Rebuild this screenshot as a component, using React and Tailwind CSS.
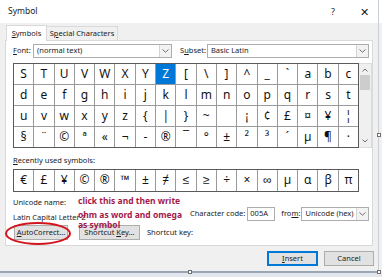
import React from "react";

const rows = [
  ["S", "T", "U", "V", "W", "X", "Y", "Z", "[", "\\", "]", "^", "_", "`", "a", "b", "c"],
  ["d", "e", "f", "g", "h", "i", "j", "k", "l", "m", "n", "o", "p", "q", "r", "s", "t"],
  ["u", "v", "w", "x", "y", "z", "{", "|", "}", "~", "", "¡", "¢", "£", "¤", "¥", "¦"],
  ["§", "¨", "©", "ª", "«", "¬", "-", "®", "¯", "°", "±", "²", "³", "´", "µ", "¶", "·"],
];

const recent = ["€", "£", "¥", "©", "®", "™", "±", "≠", "≤", "≥", "÷", "×", "∞", "µ", "α", "β", "π"];

function Chevron() {
  return (
    <svg width="7" height="4" viewBox="0 0 7 4" fill="none" stroke="#606060" strokeWidth="0.9">
      <path d="M0.5 0.5 L3.5 3.2 L6.5 0.5" />
    </svg>
  );
}

function Select({ value, className }) {
  return (
    <div className={`flex h-[14px] items-center border border-[#adadad] bg-white ${className}`}>
      <span className="flex-1 whitespace-nowrap pl-[3px] leading-none">{value}</span>
      <span className="flex h-full w-[12px] items-center justify-center border-l border-[#d4d4d4] bg-[#f2f2f2]">
        <Chevron />
      </span>
    </div>
  );
}

function Button({ children, primary, className }) {
  return (
    <div
      className={`flex h-[15px] items-center justify-center whitespace-nowrap bg-[#e1e1e1] leading-none ${
        primary ? "border-2 border-[#0078d7]" : "border border-[#adadad]"
      } ${className}`}
    >
      {children}
    </div>
  );
}

export default function App() {
  return (
    <div
      className="relative h-[277px] w-[382px] overflow-hidden bg-[#f0f0f0] text-[7.5px] text-[#1a1a1a]"
      style={{ fontFamily: '"Noto Sans", sans-serif' }}
    >
      {/* title bar */}
      <div className="flex h-[23px] items-center bg-white pl-[8px]">
        <span className="text-[8.5px]">Symbol</span>
        <span className="ml-auto mr-[25px] text-[9px]">?</span>
        <span className="mr-[13px] text-[11px] leading-none">✕</span>
      </div>

      {/* tabs */}
      <div className="flex h-[17px] items-end pl-[6px]">
        <div className="relative z-10 -mb-px flex h-[16px] w-[41px] items-center justify-center border border-b-0 border-[#d9d9d9] bg-white">
          <span>
            <u>S</u>ymbols
          </span>
        </div>
        <div className="flex h-[14px] w-[71px] items-center justify-center border border-b-0 border-l-0 border-[#d9d9d9]">
          <span>
            S<u>p</u>ecial Characters
          </span>
        </div>
      </div>

      {/* panel */}
      <div className="mx-[5px] h-[206px] w-[368px] border border-[#d9d9d9] bg-white pl-[7px]">
        <div className="mt-[3px] flex items-center">
          <span className="w-[20px]">
            <u>F</u>ont:
          </span>
          <Select value="(normal text)" className="w-[139px]" />
          <span className="ml-[8px] w-[27px]">
            S<u>u</u>bset:
          </span>
          <Select value="Basic Latin" className="w-[162px]" />
        </div>

        <div className="mt-[5px] flex">
          <div className="grid w-[346px] grid-cols-[repeat(17,minmax(0,1fr))] gap-px border border-[#5a5a5a] bg-[#9a9a9a]">
            {rows.flat().map((c, i) => (
              <div
                key={i}
                className={`flex h-[20px] items-center justify-center text-[12px] leading-none ${
                  i === 7 ? "bg-[#0078d7] text-white" : "bg-white text-[#111]"
                }`}
              >
                {c}
              </div>
            ))}
          </div>
          <div className="flex w-[13px] flex-col items-center border border-l-0 border-[#dcdcdc] bg-[#f0f0f0]">
            <svg className="mt-[4px]" width="6" height="4" viewBox="0 0 6 4" fill="none" stroke="#606060" strokeWidth="0.9">
              <path d="M0.5 3.5 L3 1 L5.5 3.5" />
            </svg>
            <div className="mt-[3px] h-[15px] w-[10px] bg-[#cdcdcd]" />
            <svg className="mb-[4px] mt-auto" width="6" height="4" viewBox="0 0 6 4" fill="none" stroke="#606060" strokeWidth="0.9">
              <path d="M0.5 0.5 L3 3 L5.5 0.5" />
            </svg>
          </div>
        </div>

        <div className="mt-[9px] leading-none">
          <u>R</u>ecently used symbols:
        </div>
        <div className="mt-[4px] grid w-[346px] grid-cols-[repeat(17,minmax(0,1fr))] gap-px border border-[#5a5a5a] bg-[#9a9a9a]">
          {recent.map((c, i) => (
            <div key={i} className="flex h-[21px] items-center justify-center bg-white text-[12px] leading-none text-[#111]">
              {c}
            </div>
          ))}
        </div>

        <div className="mt-[7px] leading-none">Unicode name:</div>
        <div className="mt-[1px] flex h-[14px] w-[356px] items-center">
          <span className="w-[177px] whitespace-nowrap pt-[7px]">Latin Capital Letter Z</span>
          <span className="whitespace-nowrap">Character code:</span>
          <div className="ml-[2px] flex h-[14px] w-[28px] items-center border border-[#adadad] pl-[2px]">005A</div>
          <span className="ml-[6px] mr-[1px] whitespace-nowrap">
            fro<u>m</u>:
          </span>
          <Select value="Unicode (hex)" className="flex-1" />
        </div>
        <div className="mt-[4px] flex items-center">
          <Button className="ml-[1px] w-[54px]">
            <span>
              <u>A</u>utoCorrect...
            </span>
          </Button>
          <Button className="ml-[11px] w-[61px]">
            <span>
              Shortcut <u>K</u>ey...
            </span>
          </Button>
          <span className="ml-[7px]">Shortcut key:</span>
        </div>
      </div>

      {/* bottom buttons */}
      <div className="mt-[5px] flex pl-[267px]">
        <Button primary className="w-[51px]">
          <span>
            <u>I</u>nsert
          </span>
        </Button>
        <Button className="ml-[6px] w-[50px]">Cancel</Button>
      </div>

      {/* window frame edges */}
      <div className="absolute bottom-[4px] left-0 h-[2px] w-[378px] bg-[#9aa6b4]" />
      <div className="absolute bottom-0 left-0 h-[4px] w-full bg-[#e4e8ee]" />
      <div className="absolute right-[3px] top-0 h-[273px] w-px bg-[#c8ced6]" />
      <div className="absolute bottom-[3px] left-[188px] h-[4px] w-[4px] border border-[#707070] bg-white" />
      <div className="absolute bottom-[3px] right-[1px] h-[4px] w-[4px] border border-[#707070] bg-white" />
      <div className="absolute right-[1px] top-[133px] h-[4px] w-[4px] border border-[#707070] bg-white" />

      {/* annotation */}
      <div
        className="absolute left-[78px] top-[194px] whitespace-nowrap text-[8.5px] font-bold leading-[14px] text-[#a3194b]"
        style={{ fontFamily: '"Noto Sans", sans-serif' }}
      >
        <div>click this and then write</div>
        <div>ohm as word and omega</div>
        <div className="-mt-[4px]">as symbol</div>
      </div>
      <svg className="absolute left-[4px] top-[221px]" width="68" height="25" viewBox="0 0 68 25" fill="none">
        <ellipse cx="34" cy="12.5" rx="32" ry="10.5" stroke="#d3141c" strokeWidth="2" />
      </svg>
    </div>
  );
}
